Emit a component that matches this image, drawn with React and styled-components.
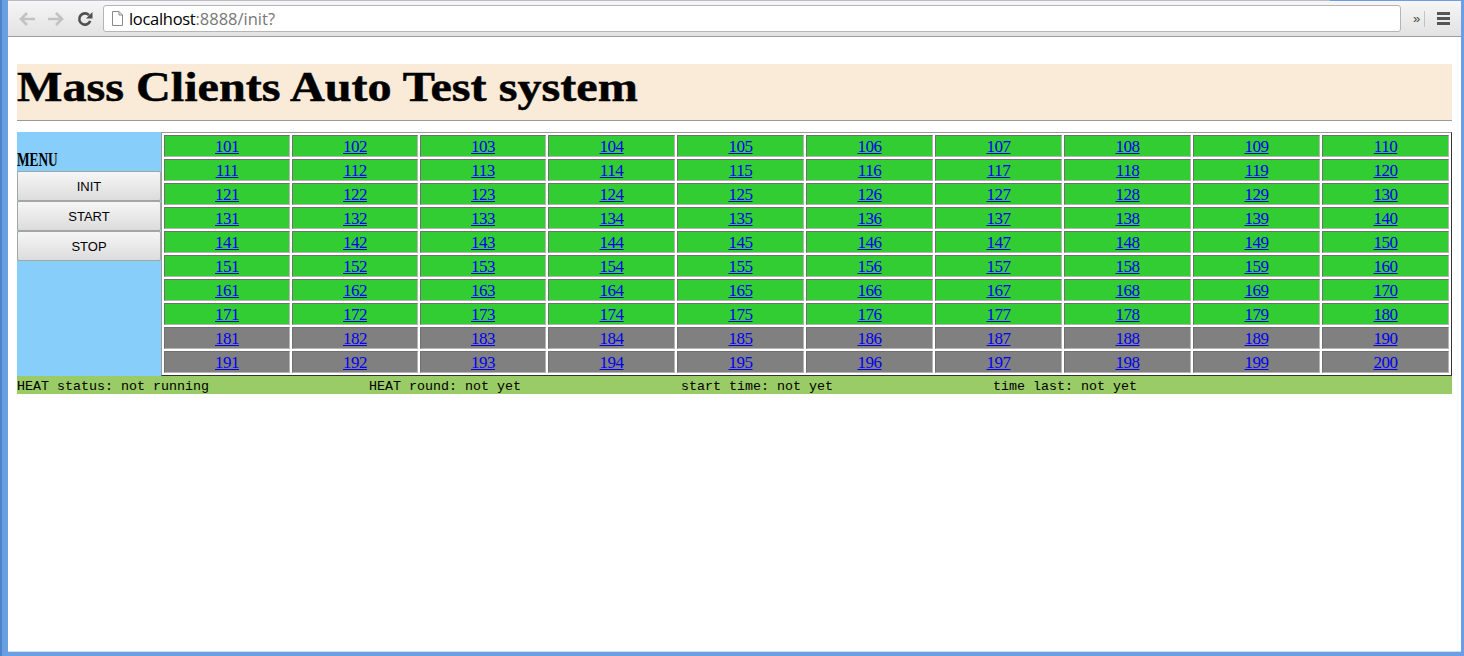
import styled, { createGlobalStyle } from "styled-components";

const GlobalStyle = createGlobalStyle`
  html, body {
    margin: 0;
    padding: 0;
    height: 100%;
    background: #6a9fe3;
  }
  #root {
    height: 656px;
    overflow: hidden;
  }
`;

const Desktop = styled.div`
  display: flex;
  flex-direction: column;
  height: 656px;
  padding: 0 3px 5px 8px;
  box-sizing: border-box;
  background: linear-gradient(to right, #4a84cc 2px, #6a9fe3 2px);
`;

const TabEdge = styled.div`
  flex: none;
  width: 1322px;
  height: 1px;
  background: #b9bdc2;
`;

const Window = styled.div`
  display: flex;
  flex-direction: column;
  flex: 1;
  background: #fff;
  overflow: hidden;
  box-shadow: 0 1px 0 #cfe0f5;
`;

const Toolbar = styled.div`
  display: flex;
  align-items: center;
  flex: none;
  height: 36px;
  padding: 0 11px 0 4px;
  box-sizing: border-box;
  background: linear-gradient(#f6f6f6, #e2e2e2);
  border-bottom: 1px solid #9d9d9d;
`;

const NavButton = styled.div`
  display: flex;
  align-items: center;
  justify-content: center;
  width: 29px;
  height: 24px;
  flex: none;
`;

const AddressBar = styled.div`
  display: flex;
  align-items: center;
  flex: 1;
  height: 27px;
  margin: 0 2px 0 4px;
  padding-left: 7px;
  box-sizing: border-box;
  background: #fff;
  border: 1px solid #b5b5b5;
  border-radius: 3px;
  font: 16.5px "Open Sans", "Liberation Sans", sans-serif;
`;

const Host = styled.span`
  margin-left: 5px;
  color: #000;
  letter-spacing: -0.3px;
`;

const UrlRest = styled.span`
  color: #777;
`;

const Overflow = styled.div`
  width: 22px;
  height: 16px;
  flex: none;
  font: 13px "Liberation Sans", sans-serif;
  line-height: 15px;
  color: #444;
  text-align: center;
  padding-left: 6px;
  box-sizing: border-box;
  border-right: 1px solid #c4c4c4;
`;

const MenuIcon = styled.div`
  display: flex;
  flex-direction: column;
  gap: 2px;
  margin-left: 12px;
  flex: none;
  span {
    display: block;
    width: 13px;
    height: 3px;
    background: #555;
  }
`;

const Page = styled.div`
  flex: 1;
  padding: 27px 9px 0;
`;

const Banner = styled.h1`
  margin: 0;
  height: 56px;
  background: #f9ebd8;
  color: #000;
  font: bold 43px/46px "Liberation Serif", serif;
  -webkit-text-stroke: 0.5px #000;
`;

const BannerText = styled.span`
  display: inline-block;
  transform: scaleX(1.12);
  transform-origin: left center;
  white-space: nowrap;
`;

const Rule = styled.hr`
  margin: 0 0 11px;
  border: 0;
  height: 1px;
  background: #9a9a9a;
`;

const Main = styled.div`
  display: flex;
  align-items: stretch;
`;

const Sidebar = styled.div`
  width: 144px;
  flex: none;
  padding-top: 18px;
  box-sizing: border-box;
  background: #87cefa;
`;

const MenuTitle = styled.div`
  width: max-content;
  font: bold 18px/21px "Liberation Serif", serif;
  color: #000;
  transform: scaleX(0.74);
  transform-origin: left center;
`;

const MenuButton = styled.button`
  display: block;
  width: 144px;
  height: 30px;
  padding: 0;
  border: 1px solid #a5a5a5;
  border-radius: 2px;
  background: linear-gradient(#f6f6f6, #dcdcdc);
  font: 13px "Liberation Sans", sans-serif;
  color: #000;
`;

const Grid = styled.table`
  flex: 1;
  min-width: 0;
  table-layout: fixed;
  border-collapse: separate;
  border-spacing: 2px;
  border: 1px solid;
  border-color: #9b9b9b #333 #333 #9b9b9b;
  background: #fff;
`;

const Cell = styled.td`
  height: 18px;
  padding: 2px 0 0;
  text-align: center;
  background: ${(props) => (props.$idle ? "#808080" : "#32cd32")};
  border: 1px solid;
  border-color: #6f6f6f #b5b5b5 #b5b5b5 #6f6f6f;
  font: 17px/18px "Liberation Serif", serif;
  letter-spacing: -0.5px;
  &:nth-child(-n + 3) {
    width: 124px;
  }
  a {
    color: #0000ee;
  }
`;

const StatusBar = styled.div`
  display: flex;
  height: 18px;
  background: #99cc66;
  color: #000;
  font: 13.33px/21px "Liberation Mono", monospace;
  white-space: pre;
  overflow: hidden;
`;

const StatusItem = styled.span`
  flex: none;
  width: ${(props) => props.$w}px;
`;

const rows = Array.from({ length: 10 }, (_, r) =>
  Array.from({ length: 10 }, (_, c) => 101 + r * 10 + c)
);

const status = [
  ["HEAT status: not running", 352],
  ["HEAT round: not yet", 312],
  ["start time: not yet", 312],
  ["time last: not yet", 312],
];

export default function App() {
  return (
    <>
      <GlobalStyle />
      <Desktop>
        <TabEdge />
        <Window>
          <Toolbar>
            <NavButton>
              <svg width="18" height="16" viewBox="0 0 18 16" fill="none" stroke="#c2c2c2" strokeWidth="2.6">
                <path d="M17 8H3M9 2 3 8l6 6" />
              </svg>
            </NavButton>
            <NavButton>
              <svg width="18" height="16" viewBox="0 0 18 16" fill="none" stroke="#c2c2c2" strokeWidth="2.6">
                <path d="M1 8h14M9 2l6 6-6 6" />
              </svg>
            </NavButton>
            <NavButton>
              <svg width="16" height="16" viewBox="0 0 16 16" fill="none">
                <path d="M13.2 9.8A5.6 5.6 0 1 1 12 4.2" stroke="#505050" strokeWidth="2.6" />
                <path d="M15.5 1v6.5H9z" fill="#505050" />
              </svg>
            </NavButton>
            <AddressBar>
              <svg width="13" height="15" viewBox="0 0 13 15" fill="#fff" stroke="#8a8a8a">
                <path d="M1.5.5h6.5l3.5 3.5v10.5h-10z" />
                <path d="M8 .5V4h3.5" fill="none" />
              </svg>
              <Host>localhost</Host>
              <UrlRest>:8888/init?</UrlRest>
            </AddressBar>
            <Overflow>»</Overflow>
            <MenuIcon>
              <span />
              <span />
              <span />
            </MenuIcon>
          </Toolbar>
          <Page>
            <Banner>
              <BannerText>Mass Clients Auto Test system</BannerText>
            </Banner>
            <Rule />
            <Main>
              <Sidebar>
                <MenuTitle>MENU</MenuTitle>
                <MenuButton>INIT</MenuButton>
                <MenuButton>START</MenuButton>
                <MenuButton>STOP</MenuButton>
              </Sidebar>
              <Grid>
                <tbody>
                  {rows.map((row, i) => (
                    <tr key={i}>
                      {row.map((n) => (
                        <Cell key={n} $idle={n > 180}>
                          <a href="#">{n}</a>
                        </Cell>
                      ))}
                    </tr>
                  ))}
                </tbody>
              </Grid>
            </Main>
            <StatusBar>
              {status.map(([text, w]) => (
                <StatusItem key={text} $w={w}>
                  {text}
                </StatusItem>
              ))}
            </StatusBar>
          </Page>
        </Window>
      </Desktop>
    </>
  );
}
